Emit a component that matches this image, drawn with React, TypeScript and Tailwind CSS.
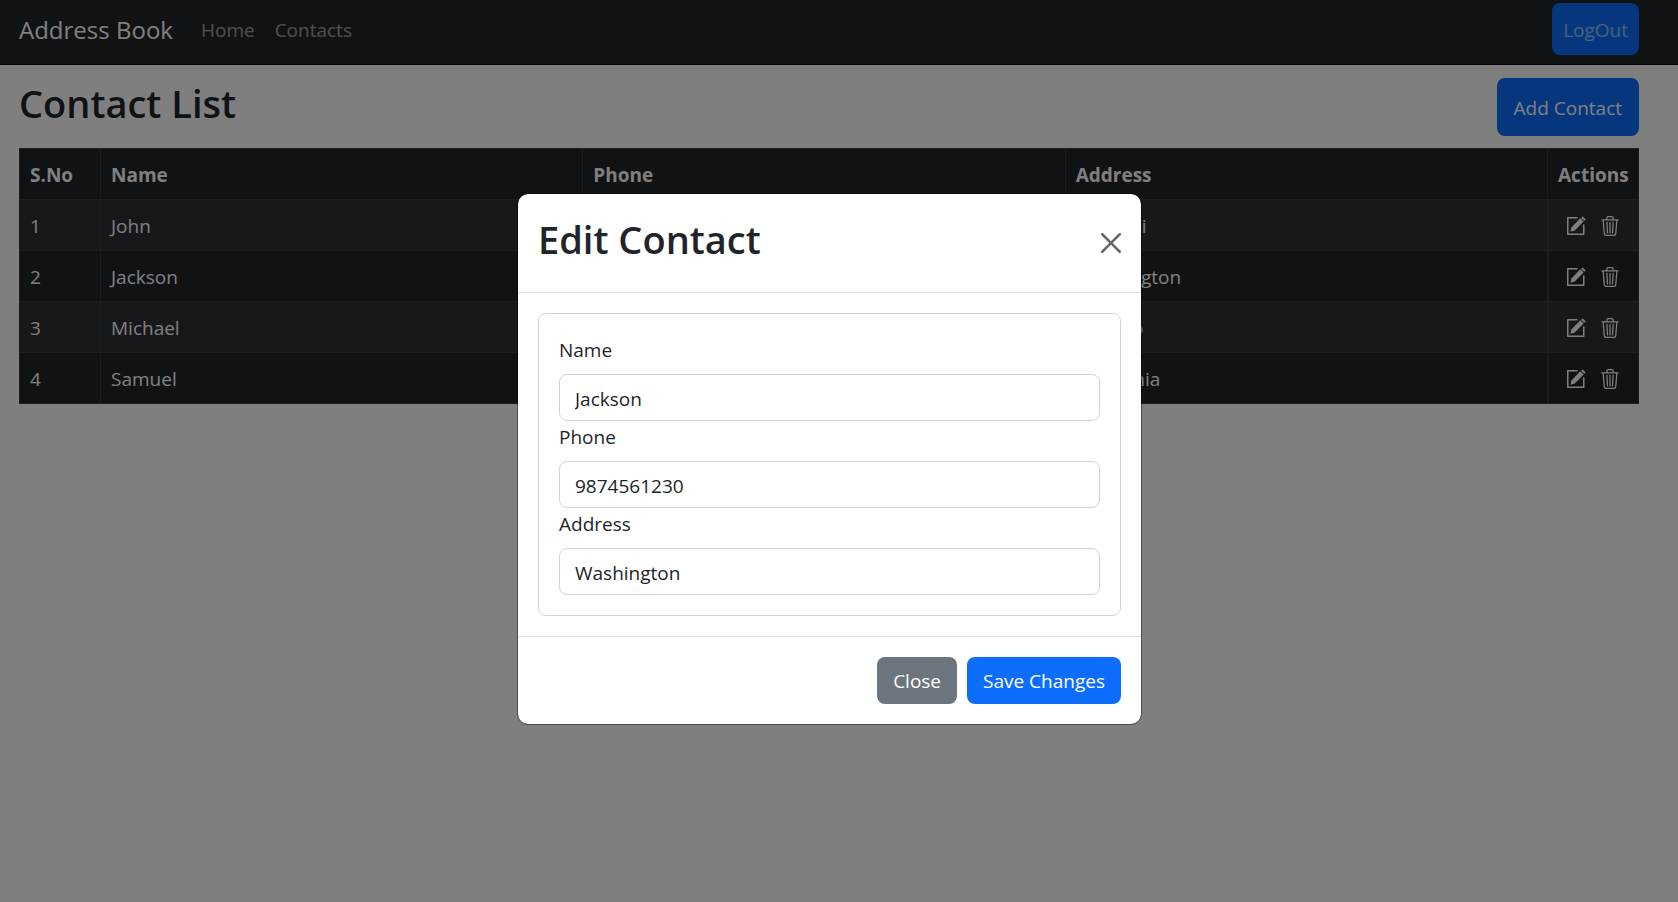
import { BsTrash3 } from "react-icons/bs";

const contacts = [
  { id: 1, name: "John", phone: "9876543210", address: "Bhavani" },
  { id: 2, name: "Jackson", phone: "9874561230", address: "Washington" },
  { id: 3, name: "Michael", phone: "9638527410", address: "Ontario" },
  { id: 4, name: "Samuel", phone: "9517538520", address: "California" },
];

function EditIcon() {
  return (
    <svg viewBox="0 0 20 20" className="size-5" fill="none" stroke="currentColor" strokeWidth="1.5" strokeLinejoin="round" aria-hidden="true">
      <path d="M11.5 1.75H1.75v16.5h16V8.5" />
      <path d="M4.4 15.8l1.2-4.6 8.7-9 3.3 3.2-8.8 9.1z" fill="currentColor" stroke="none" />
      <path d="M15.2 1.9l1.5-1.5 3 2.9-1.5 1.5z" fill="currentColor" stroke="none" />
    </svg>
  );
}

function Field({ id, label, value }: { id: string; label: string; value: string }) {
  return (
    <div className="flex flex-col">
      <label htmlFor={id} className="mb-[9px] pt-px leading-[30px]">{label}</label>
      <input
        id={id}
        defaultValue={value}
        className="h-[47px] w-full rounded-lg border border-[#ced4da] bg-white px-[15px] pt-0.5 outline-none"
      />
    </div>
  );
}

function EditDialog() {
  return (
    <div className="fixed inset-0 flex items-start justify-center bg-black/50 pt-[194px] pr-[19px]">
      <div role="dialog" aria-modal="true" aria-labelledby="dialog-title" className="w-full max-w-[623px] rounded-[10px] bg-white outline outline-black/40">
        <header className="flex h-[99px] items-center justify-between border-b border-[#dee2e6] px-5">
          <h2 id="dialog-title" className="pb-2 text-[38px] leading-[48px] font-semibold">Edit Contact</h2>
          <button type="button" aria-label="Close dialog" className="text-black/60">
            <svg viewBox="0 0 16 16" className="size-5" fill="currentColor" aria-hidden="true">
              <path d="M.293.293a1 1 0 0 1 1.414 0L8 6.586 14.293.293a1 1 0 1 1 1.414 1.414L9.414 8l6.293 6.293a1 1 0 0 1-1.414 1.414L8 9.414l-6.293 6.293a1 1 0 0 1-1.414-1.414L6.586 8 .293 1.707a1 1 0 0 1 0-1.414z" />
            </svg>
          </button>
        </header>
        <form id="contact-form" className="m-5 rounded-lg border border-[#ced4da] p-5">
          <Field id="name" label="Name" value="Jackson" />
          <Field id="phone" label="Phone" value="9874561230" />
          <Field id="address" label="Address" value="Washington" />
        </form>
        <footer className="flex justify-end gap-2.5 border-t border-[#dee2e6] p-5">
          <button type="button" className="h-[47px] rounded-lg bg-[#6c757d] px-4 pt-0.5 text-white">Close</button>
          <button type="submit" form="contact-form" className="h-[47px] rounded-lg bg-[#0d6efd] px-4 pt-0.5 text-white">Save Changes</button>
        </footer>
      </div>
    </div>
  );
}

const cell = "border border-[#373b3e] px-2.5 pt-0.5";

export default function App() {
  return (
    <div className="min-h-screen bg-white font-['Open_Sans',sans-serif] text-[19px] text-[#212529]">
      <nav className="flex h-[65px] items-center border-b border-black bg-[#212529] pr-[39px] pb-1.5 pl-[19px]">
        <a href="#" className="pt-0.5 text-[24px] text-white">Address Book</a>
        <a href="#home" className="ml-7 pt-0.5 text-white/55">Home</a>
        <a href="#contacts" className="ml-5 pt-0.5 text-white/55">Contacts</a>
        <button type="button" className="ml-auto h-[52px] rounded-lg bg-[#0d6efd] px-[11px] pt-0.5 text-white/55">LogOut</button>
      </nav>
      <main className="pr-[39px] pl-[19px]">
        <div className="flex items-start justify-between pt-[13px] pb-3">
          <h1 className="text-[38px] leading-[50px] font-semibold">Contact List</h1>
          <button type="button" className="h-[58px] rounded-lg bg-[#0d6efd] px-[17px] pt-0.5 text-white">Add Contact</button>
        </div>
        <table className="w-full table-fixed border-collapse bg-[#212529] text-left text-white">
          <colgroup>
            <col className="w-[81px]" />
            <col />
            <col />
            <col />
            <col className="w-[91px]" />
          </colgroup>
          <thead>
            <tr className="h-[51px]">
              {["S.No", "Name", "Phone", "Address", "Actions"].map((title) => (
                <th key={title} className={`${cell} font-bold`}>{title}</th>
              ))}
            </tr>
          </thead>
          <tbody>
            {contacts.map((c) => (
              <tr key={c.id} className="h-[51px] odd:bg-[#2c3034]">
                <td className={cell}>{c.id}</td>
                <td className={cell}>{c.name}</td>
                <td className={cell}>{c.phone}</td>
                <td className={cell}>{c.address}</td>
                <td className="border border-l-2 border-[#373b3e] pt-0.5">
                  <div className="flex items-center justify-center gap-3.5">
                    <button type="button" aria-label={`Edit ${c.name}`}><EditIcon /></button>
                    <button type="button" aria-label={`Delete ${c.name}`}><BsTrash3 className="size-5" /></button>
                  </div>
                </td>
              </tr>
            ))}
          </tbody>
        </table>
      </main>
      <EditDialog />
    </div>
  );
}
